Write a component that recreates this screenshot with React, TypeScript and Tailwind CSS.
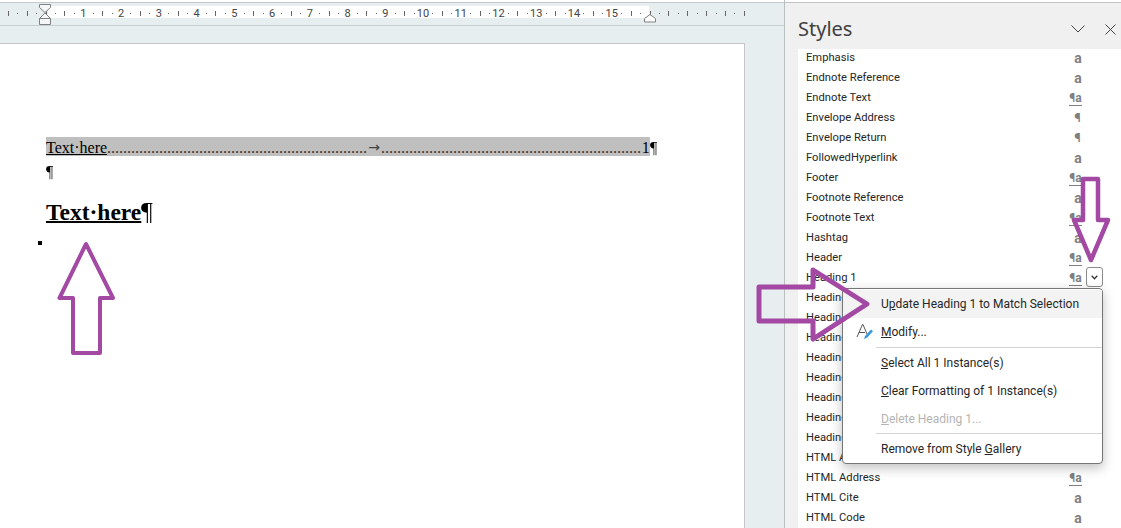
import type { ReactNode } from "react";

const serif = "[font-family:'Liberation_Serif',serif]";

type Kind = "char" | "para" | "linked";

const styleRows: [string, Kind][] = [
  ["Emphasis", "char"],
  ["Endnote Reference", "char"],
  ["Endnote Text", "linked"],
  ["Envelope Address", "para"],
  ["Envelope Return", "para"],
  ["FollowedHyperlink", "char"],
  ["Footer", "linked"],
  ["Footnote Reference", "char"],
  ["Footnote Text", "linked"],
  ["Hashtag", "char"],
  ["Header", "linked"],
  ["Heading 1", "linked"],
  ["Heading 2", "linked"],
  ["Heading 3", "linked"],
  ["Heading 4", "linked"],
  ["Heading 5", "linked"],
  ["Heading 6", "linked"],
  ["Heading 7", "linked"],
  ["Heading 8", "linked"],
  ["Heading 9", "linked"],
  ["HTML Acronym", "char"],
  ["HTML Address", "linked"],
  ["HTML Cite", "char"],
  ["HTML Code", "char"],
];

function KindIcon({ kind }: { kind: Kind }) {
  if (kind === "char") {
    return <span className="w-[24px] text-center text-[14px] font-bold text-[#7f7f7f]">a</span>;
  }
  if (kind === "para") {
    return <span className="w-[24px] pr-[1px] text-center text-[13px] font-bold text-[#7f7f7f]">¶</span>;
  }
  return (
    <span className="w-[24px] pr-[5px] text-center text-[12px] font-bold leading-[14px] text-[#7f7f7f]">
      <span className="border-b border-[#7f7f7f]">¶a</span>
    </span>
  );
}

function Ruler() {
  const unit = 37.75;
  const origin = 45.5;
  const marks: ReactNode[] = [];
  for (let i = -4; i <= 74; i++) {
    const x = Math.round(origin + (i * unit) / 4) + 0.5;
    const q = ((i % 4) + 4) % 4;
    if (q === 0 && i >= 4 && i <= 60) continue;
    const dot = q === 1 || q === 3;
    marks.push(<line key={i} x1={x} x2={x} y1={dot ? 10 : 8} y2={dot ? 11 : 13} stroke="#666" />);
  }
  return (
    <svg width="784" height="22" className="block">
      <rect x="48" y="3" width="601" height="12" fill="#fff" />
      {marks}
      {Array.from({ length: 15 }, (_, n) => (
        <text key={n} x={origin + (n + 1) * unit} y="13.500" textAnchor="middle" fontSize="11" fontFamily="Roboto, sans-serif" fill="#444">
          {n + 1}
        </text>
      ))}
      {/* indent markers */}
      <path d="M39.500 1.500h11v3l-5.500 5-5.500-5zM39.500 15.500l5.500-5.500 5.500 5.500v6h-11zM39.500 15.500h11" fill="#f4f6f7" stroke="#808080" />
      <path d="M644.500 15.500l5.500-4 5.500 4v3.500h-11z" fill="#fff" stroke="#808080" />
    </svg>
  );
}

function MenuItem({ children, disabled, active }: { children: ReactNode; disabled?: boolean; active?: boolean }) {
  return (
    <div className={`flex h-[28px] items-center pl-[38px] ${active ? "bg-[#f3f3f3]" : ""} ${disabled ? "text-[#b4b4b4]" : "text-[#262626]"}`}>
      {children}
    </div>
  );
}

function StylesPane() {
  return (
    <div className="relative flex h-full w-[336px] flex-col bg-[#f0f0f0] [font-family:Roboto,sans-serif]">
      <div className="flex h-[46px] shrink-0 items-center pl-[13px] pr-[5px] pt-[6px]">
        <span className="flex-1 text-[20px] text-[#404040] [font-family:'Noto_Sans',sans-serif]">Styles</span>
        <svg width="14" height="8" viewBox="0 0 14 8" className="mr-[20px]" fill="none" stroke="#444">
          <path d="M.5.5 7 7l6.500-6.500" />
        </svg>
        <svg width="11" height="11" viewBox="0 0 11 11" fill="none" stroke="#444">
          <path d="M.5.5l10 10M10.500.5l-10 10" />
        </svg>
      </div>
      <div className="ml-[13px] flex-1 overflow-hidden bg-white pl-[8px] pr-[31px]">
        <div className="-mt-[1px]">
          {styleRows.map(([name, kind]) => (
            <div key={name} className="flex h-[20px] items-center justify-between text-[11.200px] text-[#262626]">
              <span>{name}</span>
              <KindIcon kind={kind} />
            </div>
          ))}
        </div>
      </div>

      {/* drop button for the hovered row */}
      <div className="absolute left-[301px] top-[264px] flex h-[20px] w-[17px] items-center justify-center rounded-[3px] border border-[#8a8a8a] bg-white">
        <svg width="7" height="5" viewBox="0 0 7 5" fill="none" stroke="#333" strokeWidth="1.3">
          <path d="M.7.8 3.500 3.700 6.300.8" />
        </svg>
      </div>

      {/* context menu */}
      <div className="absolute left-[57px] top-[285px] w-[261px] rounded-[4px] border border-[#767676] bg-white text-[12px] shadow-[0_4px_12px_rgba(0,0,0,0.25)]">
        <div className="mt-[1px]">
          <MenuItem active>
            <span>U<span className="underline">p</span>date Heading 1 to Match Selection</span>
          </MenuItem>
        </div>
        <div className="relative">
          <MenuItem>
            <span><span className="underline">M</span>odify...</span>
          </MenuItem>
          <svg width="18" height="18" viewBox="0 0 18 18" className="absolute left-[13px] top-[5px]" fill="none">
            <path d="M1 14 6.500 1.500h.5L11 11M3 9.500h6" stroke="#555" />
            <path d="M8 16l1-3 6-6.500 2 1.800-6 6.500z" fill="#3a96dd" />
          </svg>
        </div>
        <div className="my-[1px] ml-[33px] h-px bg-[#d4d4d4]" />
        <MenuItem>
          <span><span className="underline">S</span>elect All 1 Instance(s)</span>
        </MenuItem>
        <MenuItem>
          <span><span className="underline">C</span>lear Formatting of 1 Instance(s)</span>
        </MenuItem>
        <MenuItem disabled>
          <span><span className="underline">D</span>elete Heading 1...</span>
        </MenuItem>
        <div className="ml-[33px] h-px bg-[#d4d4d4]" />
        <div className="pt-[1px]">
          <MenuItem>
            <span>Remove from Style <span className="underline">G</span>allery</span>
          </MenuItem>
        </div>
      </div>
    </div>
  );
}

function Page() {
  return (
    <div className={`relative h-full w-[745px] border-r border-t border-[#c6c6c6] bg-white pl-[46px] pt-[93px] text-black ${serif}`}>
      <div className="flex w-[611px] items-start text-[16px] leading-[21px]">
        <div className="flex h-[19px] w-[604px] bg-[#bfbfbf]">
          <span className="underline">Text·here</span>
          <span className="w-[260px] whitespace-nowrap text-[#333]">{".".repeat(65)}</span>
          <span className="w-[14px] text-center text-[14px] text-[#444] [font-family:'DejaVu_Sans',sans-serif]">→</span>
          <span className="flex-1 whitespace-nowrap text-[#333]">{".".repeat(65)}</span>
          <span>1</span>
        </div>
        <span className="inline-block [will-change:transform]">¶</span>
      </div>
      <div className="mt-[4px] w-fit text-[16px] leading-[19px] [will-change:transform]">¶</div>
      <div className="mt-[17px] text-[23.500px] font-bold leading-[27px]">
        <span className="underline decoration-2">Text·here</span>
        <span className="inline-block text-[26px] font-normal leading-[27px] [will-change:transform]">¶</span>
      </div>
      <div className="absolute left-[38px] top-[197px] h-[4px] w-[4px] bg-black" />
    </div>
  );
}

export default function App() {
  return (
    <div className="relative flex h-[528px] w-[1121px] overflow-hidden bg-[#e7eef0]">
      <div className="flex h-full w-[785px] shrink-0 flex-col border-r border-[#b9c0c2]">
        <div className="h-[3px] shrink-0 border-b border-[#c4c8ca] bg-white" />
        <div className="h-[23px] shrink-0 border-b border-[#c8cfd1]">
          <Ruler />
        </div>
        <div className="min-h-0 flex-1 pt-[17px]">
          <Page />
        </div>
      </div>
      <div className="flex h-full min-w-0 flex-1 flex-col">
        <div className="h-[3px] shrink-0 border-b border-[#c4c4c4] bg-white" />
        <div className="min-h-0 flex-1">
          <StylesPane />
        </div>
      </div>

      {/* purple callout arrows pasted over the screenshot */}
      <svg width="1121" height="528" className="pointer-events-none absolute inset-0" fill="#ffffff00" stroke="#a349a4" strokeWidth="4" strokeLinejoin="round">
        <path d="M86 244 59.500 298H73v55h27v-55h13z" />
        <path d="M1083 179h15v41h10l-17 40-17-40h9z" strokeWidth="4.500" />
        <path d="M759 287h54v-17l54 34-54 35v-18h-54z" strokeWidth="5" />
      </svg>
    </div>
  );
}
